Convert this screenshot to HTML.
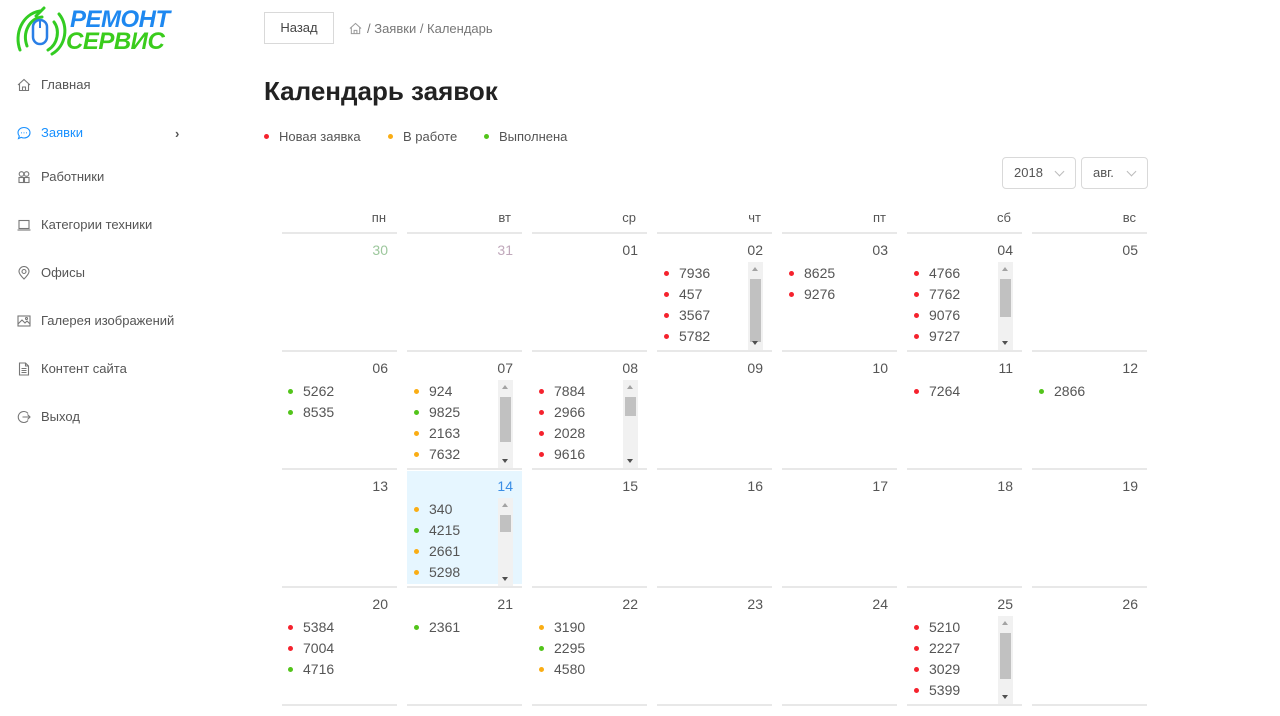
<!DOCTYPE html>
<html><head><meta charset="utf-8"><style>
*{margin:0;padding:0;box-sizing:border-box}
body{width:1280px;height:716px;overflow:hidden;background:#fff;font-family:"Liberation Sans","DejaVu Sans",sans-serif;color:#555;position:relative}
.a{position:absolute}
.nav{position:absolute;left:17px;font-size:13px;color:#555;display:flex;align-items:center}
.nav svg{width:14px;height:14px;margin-right:10px;stroke:#777;fill:none;stroke-width:1.1}
.line{position:absolute;height:2px;background:#e8e8e8;width:115px}
.dn{position:absolute;width:105px;text-align:right;font-size:14px;color:#555}
.it{position:absolute;font-size:14px;line-height:21px;color:#555}
.it div{position:relative;padding-left:22px}
.it div:before{content:"";position:absolute;left:7px;top:8px;width:5px;height:5px;border-radius:50%;background:var(--c)}
.r{--c:#f5222d}.o{--c:#faad14}.g{--c:#52c41a}
.sb{position:absolute;width:15px;height:88px;background:#f1f1f1}
.sb .t{position:absolute;left:2px;width:11px;background:#c1c1c1}
.sb .u{position:absolute;left:4px;top:5px;border:3.5px solid transparent;border-bottom:4px solid #a3a3a3;border-top:0}
.sb .d{position:absolute;left:4px;bottom:5px;border:3.5px solid transparent;border-top:4px solid #505050;border-bottom:0}
.hd{position:absolute;top:210px;width:105px;text-align:right;font-size:13px;color:#555}
.sel{position:absolute;top:157px;height:32px;border:1px solid #d9d9d9;border-radius:4px;font-size:13px;color:#555;padding:7px 0 0 11px}
.sel:after{content:"";position:absolute;right:12px;top:10px;width:6px;height:6px;border-right:1px solid #bbb;border-bottom:1px solid #bbb;transform:rotate(45deg)}
</style></head><body>

<svg class="a" style="left:14px;top:6px" width="58" height="52" viewBox="0 0 58 52">
<g fill="none" stroke="#33cc22" stroke-width="3" stroke-linecap="round">
<path d="M6 44 C0 28 8 8 26 5"/>
<path d="M13 40 C8 26 16 12 28 11"/>
<path d="M40 16 C46 24 44 38 34 44"/>
<path d="M45 8 C55 20 52 40 38 48"/>
<path d="M22 10 L30 2"/>
</g>
<rect x="19" y="14" width="14" height="24" rx="7" fill="none" stroke="#2a7fe6" stroke-width="2.5"/>
<line x1="26" y1="14" x2="26" y2="22" stroke="#2a7fe6" stroke-width="2"/>
</svg>
<div class="a" style="left:70px;top:9px;font:italic bold 24px/22px 'Liberation Sans',sans-serif;color:#1e88f0;letter-spacing:-0.5px">РЕМОНТ</div>
<div class="a" style="left:66px;top:31px;font:italic bold 24px/22px 'Liberation Sans',sans-serif;color:#3acc1c;letter-spacing:-0.5px">СЕРВИС</div>

<div class="nav" style="top:77px"><svg viewBox="0 0 14 14"><path d="M1 7 L7 1.5 L13 7 M2.5 6 V12.5 H11.5 V6 M5.5 12.5 V9 H8.5 V12.5"/></svg>Главная</div>
<div class="nav" style="top:125px;color:#1890ff"><svg viewBox="0 0 14 14" style="stroke:#1890ff"><path d="M7 1.5 C10.5 1.5 13 3.8 13 6.7 C13 9.6 10.5 12 7 12 C6 12 5 11.8 4.2 11.4 L1.5 12.5 L2.3 10 C1.5 9.1 1 8 1 6.7 C1 3.8 3.5 1.5 7 1.5Z"/><path d="M4.3 6.8h.6M6.7 6.8h.6M9.1 6.8h.6" stroke-width="1.5"/></svg>Заявки</div>
<div class="a" style="left:175px;top:126px;font-size:13px;color:#555;font-weight:bold">›</div>
<div class="nav" style="top:169px"><svg viewBox="0 0 14 14"><circle cx="4.5" cy="4" r="2.3"/><circle cx="9.5" cy="4" r="2.3"/><rect x="2" y="7.5" width="4.5" height="5"/><rect x="7.5" y="7.5" width="4.5" height="5"/></svg>Работники</div>
<div class="nav" style="top:217px"><svg viewBox="0 0 14 14"><rect x="2" y="2.5" width="10" height="8"/><path d="M0.5 12 H13.5"/></svg>Категории техники</div>
<div class="nav" style="top:265px"><svg viewBox="0 0 14 14"><path d="M7 13 C3 9 2 7 2 5.5 A5 5 0 0 1 12 5.5 C12 7 11 9 7 13Z"/><circle cx="7" cy="5.5" r="2"/></svg>Офисы</div>
<div class="nav" style="top:313px"><svg viewBox="0 0 14 14"><rect x="1" y="2" width="12" height="10"/><path d="M1 10 L5 6 L8 9 L10 7 L13 10"/><circle cx="9.5" cy="4.5" r="1"/></svg>Галерея изображений</div>
<div class="nav" style="top:361px"><svg viewBox="0 0 14 14"><path d="M2.5 1 H8.5 L11.5 4 V13 H2.5Z M8.5 1 V4 H11.5 M4.5 6.5 H9.5 M4.5 8.5 H9.5 M4.5 10.5 H9.5"/></svg>Контент сайта</div>
<div class="nav" style="top:409px"><svg viewBox="0 0 14 14"><path d="M11 3.5 A5.5 5.5 0 1 0 11 10.5 M5.5 7 H13 M10.5 4.5 L13 7 L10.5 9.5"/></svg>Выход</div>

<div class="a" style="left:264px;top:12px;width:70px;height:32px;border:1px solid #d9d9d9;font-size:13px;color:#444;text-align:center;line-height:30px">Назад</div>
<svg class="a" style="left:349px;top:22px" width="13" height="13" viewBox="0 0 14 14" fill="none" stroke="#999" stroke-width="1.1"><path d="M1 7 L7 1.5 L13 7 M2.5 6 V12.5 H11.5 V6 M5.5 12.5 V9 H8.5 V12.5"/></svg>
<div class="a" style="left:367px;top:21px;font-size:13px;color:#777">/ Заявки / Календарь</div>
<div class="a" style="left:264px;top:76px;font-size:26px;font-weight:bold;color:#222">Календарь заявок</div>
<div class="a it" style="left:257px;top:126px;font-size:13px"><div class="r">Новая заявка</div></div>
<div class="a it" style="left:381px;top:126px;font-size:13px"><div class="o">В работе</div></div>
<div class="a it" style="left:477px;top:126px;font-size:13px"><div class="g">Выполнена</div></div>

<div class="sel" style="left:1002px;width:74px">2018</div>
<div class="sel" style="left:1081px;width:67px">авг.</div>

<div class="hd" style="left:281px">пн</div><div class="hd" style="left:406px">вт</div><div class="hd" style="left:531px">ср</div><div class="hd" style="left:656px">чт</div><div class="hd" style="left:781px">пт</div><div class="hd" style="left:906px">сб</div><div class="hd" style="left:1031px">вс</div>

<div class="a" style="left:407px;top:471px;width:115px;height:113px;background:#e6f6ff"></div>

<div class="line" style="left:282px;top:232px"></div><div class="line" style="left:407px;top:232px"></div><div class="line" style="left:532px;top:232px"></div><div class="line" style="left:657px;top:232px"></div><div class="line" style="left:782px;top:232px"></div><div class="line" style="left:907px;top:232px"></div><div class="line" style="left:1032px;top:232px"></div>
<div class="line" style="left:282px;top:350px"></div><div class="line" style="left:407px;top:350px"></div><div class="line" style="left:532px;top:350px"></div><div class="line" style="left:657px;top:350px"></div><div class="line" style="left:782px;top:350px"></div><div class="line" style="left:907px;top:350px"></div><div class="line" style="left:1032px;top:350px"></div>
<div class="line" style="left:282px;top:468px"></div><div class="line" style="left:407px;top:468px"></div><div class="line" style="left:532px;top:468px"></div><div class="line" style="left:657px;top:468px"></div><div class="line" style="left:782px;top:468px"></div><div class="line" style="left:907px;top:468px"></div><div class="line" style="left:1032px;top:468px"></div>
<div class="line" style="left:282px;top:586px"></div><div class="line" style="left:407px;top:586px"></div><div class="line" style="left:532px;top:586px"></div><div class="line" style="left:657px;top:586px"></div><div class="line" style="left:782px;top:586px"></div><div class="line" style="left:907px;top:586px"></div><div class="line" style="left:1032px;top:586px"></div>
<div class="line" style="left:282px;top:704px"></div><div class="line" style="left:407px;top:704px"></div><div class="line" style="left:532px;top:704px"></div><div class="line" style="left:657px;top:704px"></div><div class="line" style="left:782px;top:704px"></div><div class="line" style="left:907px;top:704px"></div><div class="line" style="left:1032px;top:704px"></div>

<div class="dn" style="left:283px;top:242px;color:#9cc79c">30</div><div class="dn" style="left:408px;top:242px;color:#c0a8bb">31</div><div class="dn" style="left:533px;top:242px">01</div><div class="dn" style="left:658px;top:242px">02</div><div class="dn" style="left:783px;top:242px">03</div><div class="dn" style="left:908px;top:242px">04</div><div class="dn" style="left:1033px;top:242px">05</div>
<div class="dn" style="left:283px;top:360px">06</div><div class="dn" style="left:408px;top:360px">07</div><div class="dn" style="left:533px;top:360px">08</div><div class="dn" style="left:658px;top:360px">09</div><div class="dn" style="left:783px;top:360px">10</div><div class="dn" style="left:908px;top:360px">11</div><div class="dn" style="left:1033px;top:360px">12</div>
<div class="dn" style="left:283px;top:478px">13</div><div class="dn" style="left:408px;top:478px;color:#3a8ee6">14</div><div class="dn" style="left:533px;top:478px">15</div><div class="dn" style="left:658px;top:478px">16</div><div class="dn" style="left:783px;top:478px">17</div><div class="dn" style="left:908px;top:478px">18</div><div class="dn" style="left:1033px;top:478px">19</div>
<div class="dn" style="left:283px;top:596px">20</div><div class="dn" style="left:408px;top:596px">21</div><div class="dn" style="left:533px;top:596px">22</div><div class="dn" style="left:658px;top:596px">23</div><div class="dn" style="left:783px;top:596px">24</div><div class="dn" style="left:908px;top:596px">25</div><div class="dn" style="left:1033px;top:596px">26</div>

<div class="it" style="left:657px;top:263px"><div class="r">7936</div><div class="r">457</div><div class="r">3567</div><div class="r">5782</div></div>
<div class="sb" style="left:748px;top:262px"><div class="u"></div><div class="t" style="top:17px;height:63px"></div><div class="d"></div></div>
<div class="it" style="left:782px;top:263px"><div class="r">8625</div><div class="r">9276</div></div>
<div class="it" style="left:907px;top:263px"><div class="r">4766</div><div class="r">7762</div><div class="r">9076</div><div class="r">9727</div></div>
<div class="sb" style="left:998px;top:262px"><div class="u"></div><div class="t" style="top:17px;height:38px"></div><div class="d"></div></div>

<div class="it" style="left:281px;top:381px"><div class="g">5262</div><div class="g">8535</div></div>
<div class="it" style="left:407px;top:381px"><div class="o">924</div><div class="g">9825</div><div class="o">2163</div><div class="o">7632</div></div>
<div class="sb" style="left:498px;top:380px"><div class="u"></div><div class="t" style="top:17px;height:45px"></div><div class="d"></div></div>
<div class="it" style="left:532px;top:381px"><div class="r">7884</div><div class="r">2966</div><div class="r">2028</div><div class="r">9616</div></div>
<div class="sb" style="left:623px;top:380px"><div class="u"></div><div class="t" style="top:17px;height:19px"></div><div class="d"></div></div>
<div class="it" style="left:907px;top:381px"><div class="r">7264</div></div>
<div class="it" style="left:1032px;top:381px"><div class="g">2866</div></div>

<div class="it" style="left:407px;top:499px"><div class="o">340</div><div class="g">4215</div><div class="o">2661</div><div class="o">5298</div></div>
<div class="sb" style="left:498px;top:498px"><div class="u"></div><div class="t" style="top:17px;height:17px"></div><div class="d"></div></div>

<div class="it" style="left:281px;top:617px"><div class="r">5384</div><div class="r">7004</div><div class="g">4716</div></div>
<div class="it" style="left:407px;top:617px"><div class="g">2361</div></div>
<div class="it" style="left:532px;top:617px"><div class="o">3190</div><div class="g">2295</div><div class="o">4580</div></div>
<div class="it" style="left:907px;top:617px"><div class="r">5210</div><div class="r">2227</div><div class="r">3029</div><div class="r">5399</div></div>
<div class="sb" style="left:998px;top:616px"><div class="u"></div><div class="t" style="top:17px;height:46px"></div><div class="d"></div></div>

</body></html>
